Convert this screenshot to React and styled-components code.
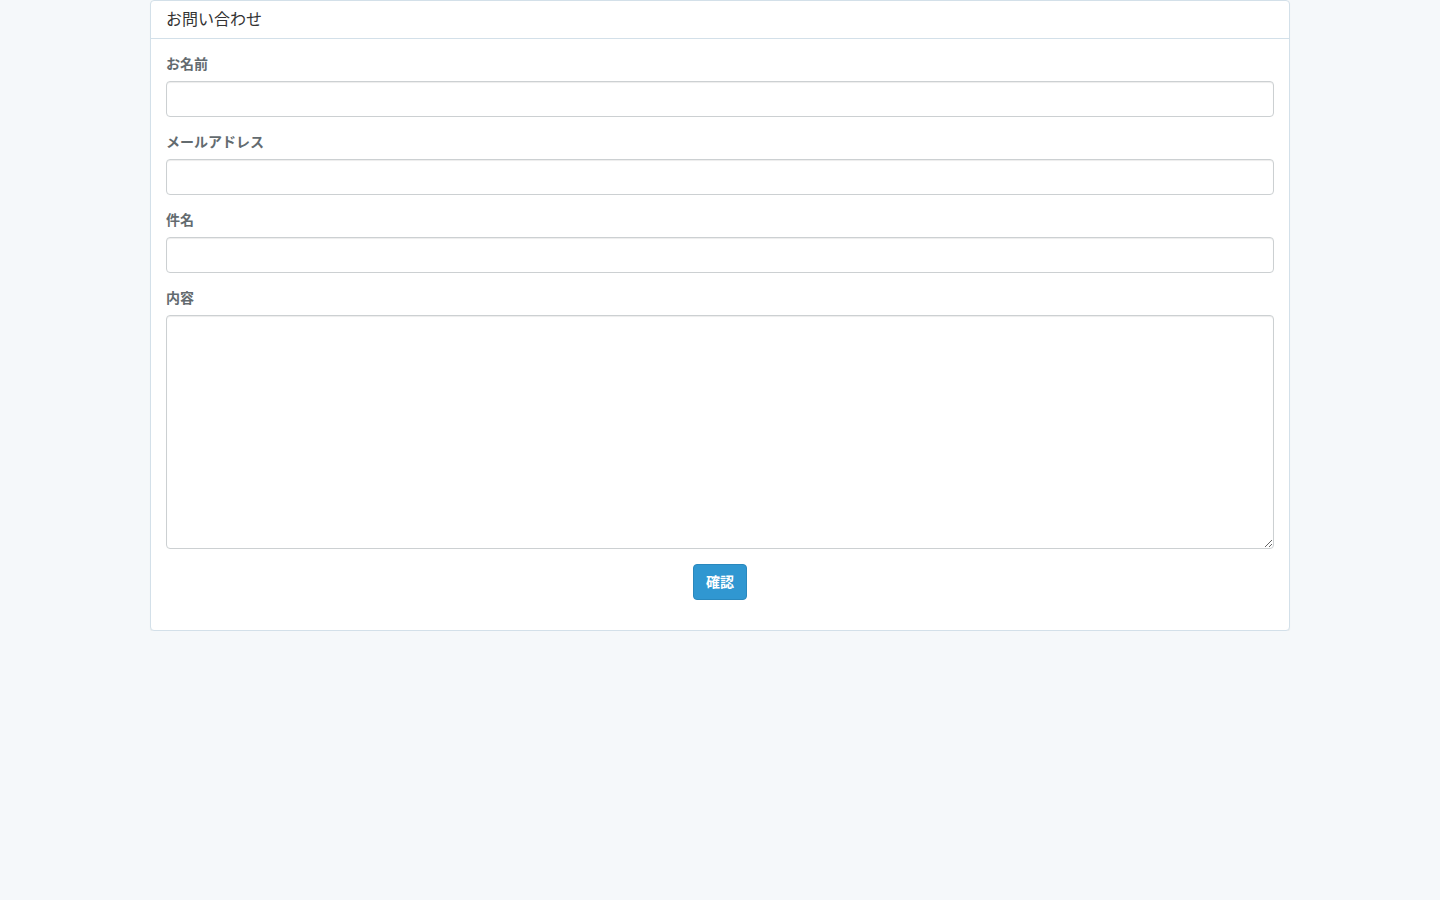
import styled, { createGlobalStyle } from "styled-components"

const GlobalStyle = createGlobalStyle`
    * { box-sizing: border-box; }
    html, body {
        margin: 0;
        background-color: #f5f8fa;
        font-family: "Noto Sans CJK JP", "Noto Sans", sans-serif;
        font-size: 14px;
        line-height: 1.6;
        color: #636b6f;
    }
`

const StyledContainer = styled.div`
    width: 1170px;
    margin: 0 auto;
    padding: 0 15px;
`
const StyledPanel = styled.section`
    background-color: #FFFFFF;
    border: 1px solid #d3e0e9;
    border-radius: 4px;
    box-shadow: 0 1px 1px rgba(0, 0, 0, 0.05);
`
const StyledPanelHeading = styled.div`
    padding: 6px 15px 8px;
    height: 38px;
    border-bottom: 1px solid #d3e0e9;
    color: #333333;
    font-size: 16px;
    line-height: 22px;
`
const StyledPanelBody = styled.form`
    padding: 15px;
`
const StyledFormGroup = styled.div`
    margin-bottom: 15px;
    text-align: ${props => (props.$center ? "center" : "left")};
`
const StyledLabel = styled.label`
    display: block;
    margin-bottom: 5px;
    padding-bottom: 4px;
    font-size: 14px;
    font-weight: 700;
    line-height: 18px;
    color: #636b6f;
`
const StyledInput = styled.input`
    display: block;
    width: 100%;
    height: 36px;
    padding: 6px 12px;
    font: inherit;
    color: #555555;
    background-color: #FFFFFF;
    border: 1px solid #ccd0d2;
    border-radius: 4px;
    box-shadow: inset 0 1px 1px rgba(0, 0, 0, 0.075);
    outline: none;
`
const StyledTextarea = styled.textarea`
    display: block;
    width: 100%;
    height: 234px;
    padding: 6px 12px;
    font: inherit;
    color: #555555;
    background-color: #FFFFFF;
    border: 1px solid #ccd0d2;
    border-radius: 4px;
    box-shadow: inset 0 1px 1px rgba(0, 0, 0, 0.075);
    outline: none;
    resize: vertical;
`
const StyledButton = styled.button`
    display: inline-block;
    height: 36px;
    padding: 0 12px 2px;
    font-family: inherit;
    font-size: 14px;
    font-weight: 700;
    color: #FFFFFF;
    background-color: #3097d1;
    border: 1px solid #2a88bd;
    border-radius: 4px;
    cursor: pointer;
`

const fields = [
    { label: "お名前", name: "name" },
    { label: "メールアドレス", name: "email" },
    { label: "件名", name: "subject" },
]

const App = () => {
    return (
        <>
            <GlobalStyle />
            <StyledContainer>
                <StyledPanel>
                    <StyledPanelHeading>お問い合わせ</StyledPanelHeading>
                    <StyledPanelBody onSubmit={e => e.preventDefault()}>
                        {fields.map(field => (
                            <StyledFormGroup key={field.name}>
                                <StyledLabel htmlFor={field.name}>{field.label}</StyledLabel>
                                <StyledInput id={field.name} name={field.name} type="text" />
                            </StyledFormGroup>
                        ))}
                        <StyledFormGroup>
                            <StyledLabel htmlFor="body">内容</StyledLabel>
                            <StyledTextarea id="body" name="body" />
                        </StyledFormGroup>
                        <StyledFormGroup $center>
                            <StyledButton type="submit">確認</StyledButton>
                        </StyledFormGroup>
                    </StyledPanelBody>
                </StyledPanel>
            </StyledContainer>
        </>
    )
}

export default App
